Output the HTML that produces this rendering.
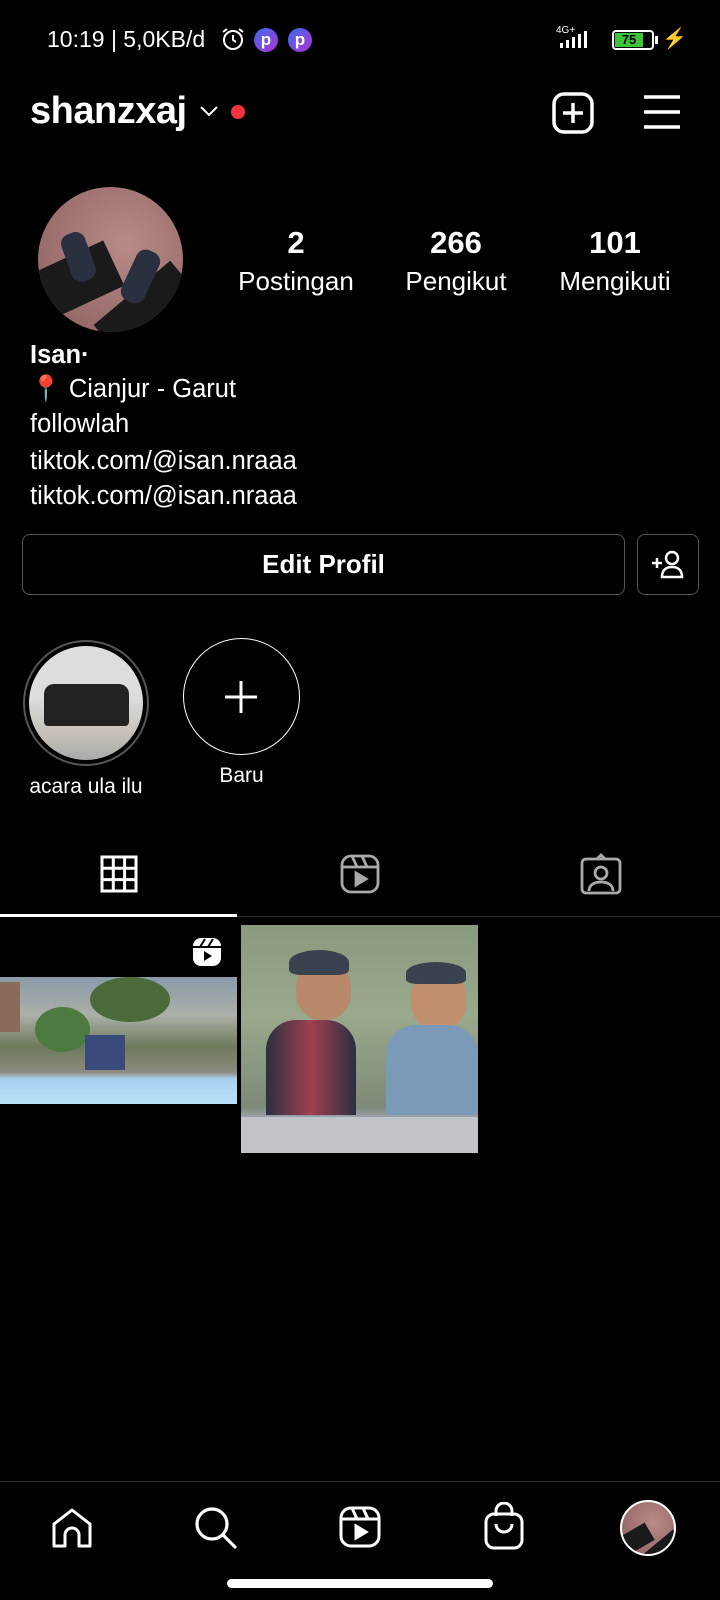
<!DOCTYPE html>
<html><head><meta charset="utf-8"><style>
*{margin:0;padding:0;box-sizing:border-box}
body{width:720px;height:1600px;background:#000;color:#fff;font-family:"Liberation Sans",sans-serif;position:relative;overflow:hidden}
.a{position:absolute}
.t{position:absolute;white-space:nowrap}
.stat{position:absolute;text-align:center;width:170px}
.stat b{display:block;font-size:31px;line-height:34px}
.stat span{display:block;font-size:26px;line-height:30px;margin-top:6px}
.bio{left:30px;font-size:25.5px;line-height:28px}
</style></head><body>
<div class="t" style="left:47px;top:26px;font-size:23px">10:19 | 5,0KB/d</div>
<svg class="a" style="left:220px;top:26px" width="26" height="26" viewBox="0 0 26 26" fill="none" stroke="#fff" stroke-width="2"><circle cx="13" cy="14" r="9"/><path d="M13 9v5l3 2M3 6l4-3M23 6l-4-3"/></svg>
<div class="a" style="left:254px;top:28px;width:24px;height:24px;border-radius:50%;background:linear-gradient(135deg,#3a6cf0,#b030d0);color:#fff;font-size:17px;font-weight:bold;text-align:center;line-height:24px">p</div>
<div class="a" style="left:288px;top:28px;width:24px;height:24px;border-radius:50%;background:linear-gradient(135deg,#3a6cf0,#b030d0);color:#fff;font-size:17px;font-weight:bold;text-align:center;line-height:24px">p</div>
<div class="t" style="left:556px;top:26px;font-size:10px;line-height:10px">4G+</div>
<svg class="a" style="left:556px;top:30px" width="46" height="20"><rect x="4" y="13" width="3" height="5" fill="#fff"/><rect x="10" y="10" width="3" height="8" fill="#fff"/><rect x="16" y="7" width="3" height="11" fill="#fff"/><rect x="22" y="4" width="3" height="14" fill="#fff"/><rect x="28" y="1" width="3" height="17" fill="#fff"/></svg>
<div class="a" style="left:612px;top:30px;width:42px;height:20px;border:2px solid #fff;border-radius:4px;padding:1px"><div style="width:28px;height:14px;background:#3cc43c;color:#000;font-size:13px;font-weight:bold;text-align:center;line-height:14px">75</div></div>
<div class="a" style="left:655px;top:36px;width:3px;height:8px;background:#fff"></div>
<div class="t" style="left:662px;top:26px;font-size:20px">⚡</div>
<div class="t" style="left:30px;top:90px;font-size:38px;font-weight:bold;letter-spacing:-0.5px">shanzxaj</div>
<svg class="a" style="left:198px;top:104px" width="22" height="14" fill="none" stroke="#fff" stroke-width="2"><path d="M3 3l8 8 8-8"/></svg>
<div class="a" style="left:231px;top:105px;width:14px;height:14px;border-radius:50%;background:#f5333f"></div>
<svg class="a" style="left:552px;top:92px" width="42" height="42" fill="none" stroke="#fff" stroke-width="3.5"><rect x="2" y="2" width="38" height="38" rx="10"/><path d="M21 11v20M11 21h20"/></svg>
<svg class="a" style="left:642px;top:94px" width="40" height="36" stroke="#fff" stroke-width="3.5"><path d="M2 3h36M2 18h36M2 33h36"/></svg>
<div class="a" style="left:38px;top:187px;width:145px;height:145px;border-radius:50%;overflow:hidden;background:radial-gradient(circle at 60% 40%,#b88a88,#8a5f5e)">
<div class="a" style="left:-10px;top:70px;width:90px;height:50px;background:#1a1a1a;transform:rotate(-25deg)"></div>
<div class="a" style="left:60px;top:100px;width:100px;height:50px;background:#1a1a1a;transform:rotate(-40deg)"></div>
<div class="a" style="left:28px;top:45px;width:25px;height:50px;background:#2a3040;border-radius:10px;transform:rotate(-20deg)"></div>
<div class="a" style="left:90px;top:62px;width:25px;height:55px;background:#2a3040;border-radius:10px;transform:rotate(25deg)"></div>
</div>
<div class="stat" style="left:211px;top:226px"><b>2</b><span>Postingan</span></div>
<div class="stat" style="left:371px;top:226px"><b>266</b><span>Pengikut</span></div>
<div class="stat" style="left:530px;top:226px"><b>101</b><span>Mengikuti</span></div>
<div class="t bio" style="top:341px;font-weight:bold">Isan·</div>
<div class="t bio" style="top:375px"><span style="color:#e33">📍</span> Cianjur - Garut</div>
<div class="t bio" style="top:410px">followlah</div>
<div class="t bio" style="top:447px">tiktok.com/@isan.nraaa</div>
<div class="t bio" style="top:482px">tiktok.com/@isan.nraaa</div>
<div class="a" style="left:22px;top:534px;width:603px;height:61px;border:1.5px solid #555;border-radius:8px;text-align:center;line-height:58px;font-size:26px;font-weight:bold">Edit Profil</div>
<div class="a" style="left:637px;top:534px;width:62px;height:61px;border:1.5px solid #555;border-radius:8px"></div>
<svg class="a" style="left:650px;top:549px" width="36" height="30" fill="none" stroke="#fff" stroke-width="2.5"><circle cx="22" cy="9" r="6"/><path d="M12 28c0-7 4-10 10-10s10 3 10 10zM2 14h10M7 9v10"/></svg>
<div class="a" style="left:23px;top:640px;width:126px;height:126px;border-radius:50%;border:2px solid #555"></div>
<div class="a" style="left:29px;top:646px;width:114px;height:114px;border-radius:50%;overflow:hidden;background:linear-gradient(#ddd 0,#ddd 45%,#c8c2ba 75%,#aaa 100%)">
<div class="a" style="left:15px;top:38px;width:85px;height:42px;background:#222;border-radius:10px 10px 4px 4px"></div></div>
<div class="t" style="left:0;width:172px;text-align:center;top:775px;font-size:21px">acara ula ilu</div>
<div class="a" style="left:183px;top:638px;width:117px;height:117px;border-radius:50%;border:1.5px solid #fff"></div>
<svg class="a" style="left:223px;top:679px" width="36" height="36" stroke="#fff" stroke-width="3"><path d="M18 2v32M2 18h32"/></svg>
<div class="t" style="left:183px;width:117px;text-align:center;top:764px;font-size:21px">Baru</div>
<svg class="a" style="left:100px;top:855px" width="38" height="38" fill="none" stroke="#fff" stroke-width="3"><rect x="2" y="2" width="34" height="34"/><path d="M13.3 2v34M24.6 2v34M2 13.3h34M2 24.6h34"/></svg>
<svg class="a" style="left:340px;top:854px" width="40" height="40" fill="none" stroke="#aaa" stroke-width="2.8"><rect x="2" y="2" width="36" height="36" rx="9"/><path d="M2 13h36M12 2l5 11M22 2l5 11"/><path d="M16 19v12l10-6z" fill="#aaa"/></svg>
<svg class="a" style="left:580px;top:853px" width="42" height="42" fill="none" stroke="#aaa" stroke-width="2.8"><rect x="2" y="6" width="38" height="34" rx="4"/><circle cx="21" cy="20" r="6"/><path d="M9 38c0-6 5-9 12-9s12 3 12 9M17 6l4-4 4 4"/></svg>
<div class="a" style="left:0;top:916px;width:720px;height:1px;background:#333"></div>
<div class="a" style="left:0;top:914px;width:237px;height:3px;background:#fff"></div>
<div class="a" style="left:0;top:977px;width:237px;height:127px;overflow:hidden;background:linear-gradient(#8a9aa8 0,#aab0a8 30%,#6e7a5c 55%,#8e8a80 75%,#a8d0ee 80%,#b8e0f8 100%)">
<div class="a" style="left:90px;top:0;width:80px;height:45px;border-radius:50%;background:#4a6a3a"></div>
<div class="a" style="left:35px;top:30px;width:55px;height:45px;border-radius:50%;background:#4c7a40"></div>
<div class="a" style="left:85px;top:58px;width:40px;height:35px;background:#3a4a7a"></div>
<div class="a" style="left:0;top:5px;width:20px;height:50px;background:#8a6a58"></div>
</div>
<svg class="a" style="left:192px;top:937px" width="30" height="30" fill="none"><rect x="1" y="1" width="28" height="28" rx="8" fill="#fff"/><path d="M16 10l5-8M8 10l5-8M1 10h28" stroke="#000" stroke-width="2"/><path d="M12 14v10l8-5z" fill="#000"/></svg>
<div class="a" style="left:241px;top:925px;width:237px;height:228px;overflow:hidden;background:linear-gradient(#8a9a7e,#9aa88c 40%,#7e8a78 80%,#9aa0a8 84%,#c8ccd0 100%)">
<div class="a" style="left:55px;top:35px;width:55px;height:60px;border-radius:45%;background:#b8886a"></div>
<div class="a" style="left:48px;top:25px;width:60px;height:25px;border-radius:50% 50% 20% 20%;background:#3a4250"></div>
<div class="a" style="left:170px;top:45px;width:55px;height:60px;border-radius:45%;background:#c0906e"></div>
<div class="a" style="left:165px;top:37px;width:60px;height:22px;border-radius:50% 50% 20% 20%;background:#3a4250"></div>
<div class="a" style="left:25px;top:95px;width:90px;height:95px;border-radius:30px 30px 0 0;background:linear-gradient(90deg,#2a3040,#a04050 50%,#2a3040)"></div>
<div class="a" style="left:145px;top:100px;width:92px;height:90px;border-radius:30px 30px 0 0;background:#7a9ab8"></div>
<div class="a" style="left:0;top:192px;width:237px;height:36px;background:#c0c4c8"></div>
</div>
<div class="a" style="left:0;top:1481px;width:720px;height:1px;background:#333"></div>
<svg class="a" style="left:51px;top:1507px" width="42" height="42" fill="none" stroke="#fff" stroke-width="3"><path d="M3 39V17L21 3l18 14v22h-11V28a7 7 0 0 0-14 0v11z" stroke-linejoin="round"/></svg>
<svg class="a" style="left:194px;top:1505px" width="44" height="46" fill="none" stroke="#fff" stroke-width="3.2"><circle cx="18" cy="19" r="15"/><path d="M29 30l12 12" stroke-linecap="round"/></svg>
<svg class="a" style="left:339px;top:1506px" width="42" height="42" fill="none" stroke="#fff" stroke-width="3"><rect x="2" y="2" width="38" height="38" rx="10"/><path d="M2 13h38M13 2l5 11M24 2l5 11"/><path d="M17 20v12l10-6z" fill="#fff"/></svg>
<svg class="a" style="left:484px;top:1502px" width="40" height="48" fill="none" stroke="#fff" stroke-width="3"><rect x="2" y="12" width="36" height="34" rx="8"/><path d="M12 14V9a8 8 0 0 1 16 0v5M12 22a8 8 0 0 0 16 0"/></svg>
<div class="a" style="left:620px;top:1500px;width:56px;height:56px;border-radius:50%;border:2px solid #fff;overflow:hidden;background:radial-gradient(circle at 60% 40%,#b88a88,#8a5f5e)">
<div class="a" style="left:-5px;top:28px;width:35px;height:20px;background:#1a1a1a;transform:rotate(-30deg)"></div>
<div class="a" style="left:22px;top:38px;width:40px;height:20px;background:#1a1a1a;transform:rotate(-40deg)"></div></div>
<div class="a" style="left:227px;top:1579px;width:266px;height:9px;border-radius:5px;background:#fff"></div>
</body></html>
